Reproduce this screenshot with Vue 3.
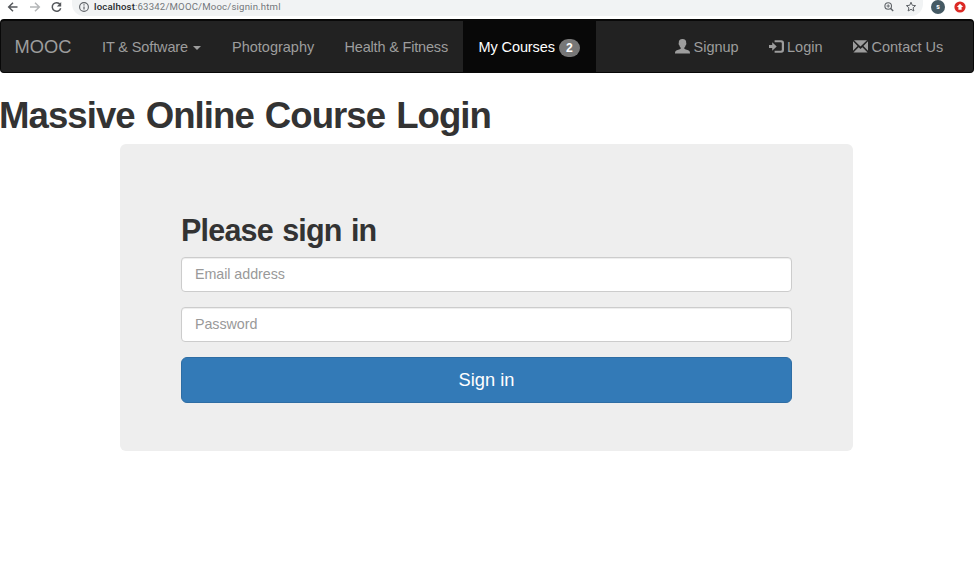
<script setup>
import { ref } from 'vue'

const email = ref('')
const password = ref('')
</script>

<template>
  <div class="page">
    <header class="browser">
      <svg class="nav-icons" width="72" height="16" viewBox="0 0 72 16" fill="none">
        <path d="M17.5 7H9M13 2.8L8.7 7L13 11.2" stroke="#55585c" stroke-width="1.5" />
        <path d="M30 7H39M35 2.8L39.3 7L35 11.2" stroke="#b4b6b8" stroke-width="1.5" />
        <path d="M60.1 4.5A4.3 4.3 0 1 0 60.7 8.2" stroke="#55585c" stroke-width="1.5" />
        <path d="M61.2 2V6.5H56.8Z" fill="#55585c" />
      </svg>
      <div class="omnibox">
        <svg class="info" width="12" height="14" viewBox="0 0 12 14" fill="none" stroke="#5f6368">
          <circle cx="6" cy="7" r="4.4" stroke-width="1.1" />
          <path d="M6 6.4V9.5M6 4.3V5.4" stroke-width="1.2" />
        </svg>
        <span class="url"><b>localhost</b>:63342/MOOC/Mooc/signin.html</span>
        <svg class="tools" width="40" height="16" viewBox="0 0 40 16" fill="none" stroke="#5f6368">
          <circle cx="8.2" cy="6" r="3.3" stroke-width="1.1" />
          <path d="M10.7 8.5L13.2 11" stroke-width="1.4" />
          <path d="M6.5 6H9.9M8.2 4.3V7.7" stroke-width=".9" />
          <path d="M31 2.2L32.3 5.3L35.6 5.6L33.1 7.8L33.9 11L31 9.3L28.1 11L28.9 7.8L26.4 5.6L29.7 5.3Z" stroke-width="1" />
        </svg>
      </div>
      <span class="avatar">s</span>
      <svg class="update" width="12" height="14" viewBox="0 0 12 14">
        <circle cx="6" cy="7" r="5.6" fill="#dc2a25" />
        <path d="M6 3.7L9.2 7.1H7.6V9.7H4.4V7.1H2.8Z" fill="#fff" />
      </svg>
    </header>

    <nav class="navbar">
      <a class="brand">MOOC</a>
      <a class="item software"><span>IT &amp; Software</span><i class="caret"></i></a>
      <a class="item photo">Photography</a>
      <a class="item health">Health &amp; Fitness</a>
      <a class="item active"><span>My Courses</span><span class="badge">2</span></a>
      <div class="right">
        <a class="item signup">
          <svg width="15" height="15" viewBox="0 0 15 15" fill="currentColor">
            <path d="M7.5 0C4.9 0 3.6 1.6 3.8 4C3.4 4.6 3.7 5.9 4.3 6.2C4.6 7.3 5.1 8.1 5.7 8.7V9.8C5.2 10.6 1.6 11 .7 12C.1 12.6 0 13.6 0 14.5H15C15 13.6 14.9 12.6 14.3 12C13.4 11 9.8 10.6 9.3 9.8V8.7C9.9 8.1 10.4 7.3 10.7 6.2C11.3 5.9 11.6 4.6 11.2 4C11.4 1.6 10.1 0 7.5 0Z" />
          </svg>
          <span>Signup</span>
        </a>
        <a class="item login">
          <svg width="15" height="15" viewBox="0 0 15 15" fill="currentColor">
            <path d="M0 5.9H3.2V3.3L7.7 7.5L3.2 11.7V9.1H0Z" />
            <path d="M5.6 1.2H12.3Q15 1.2 15 4V11Q15 13.8 12.3 13.8H5.6V11.8H11.8Q12.8 11.8 12.8 10.8V4.2Q12.8 3.2 11.8 3.2H5.6Z" />
          </svg>
          <span>Login</span>
        </a>
        <a class="item contact">
          <svg width="15" height="15" viewBox="0 0 15 15" fill="currentColor">
            <path d="M1 1.2H14L7.5 7.4Z" />
            <path d="M0 2.2L4.6 7.1L0 11.7ZM15 2.2L10.4 7.1L15 11.7Z" />
            <path d="M.4 13.6L5.6 8.3L7.5 10.1L9.4 8.3L14.6 13.6Z" />
          </svg>
          <span>Contact Us</span>
        </a>
      </div>
    </nav>

    <h1>Massive Online Course Login</h1>

    <form class="panel" @submit.prevent>
      <h2>Please sign in</h2>
      <input v-model="email" type="email" placeholder="Email address" />
      <input v-model="password" type="password" placeholder="Password" />
      <button type="submit">Sign in</button>
    </form>
  </div>
</template>

<style>
body {
  margin: 0;
  background: #fff;
}
</style>

<style scoped>
.page {
  width: 974px;
  height: 575px;
  overflow: hidden;
  background: #fff;
  color: #333;
  font-family: "Liberation Sans", Arial, sans-serif;
  font-size: 14.5px;
}
.page * {
  box-sizing: border-box;
}
.browser {
  display: flex;
  align-items: flex-start;
  height: 19px;
}
.nav-icons {
  flex: none;
}
.omnibox {
  display: flex;
  width: 851px;
  height: 16px;
  padding-left: 6px;
  background: #f1f3f4;
  border-radius: 0 0 12px 12px;
}
.url {
  margin-left: 4px;
  font: 9.6px/14px Roboto, sans-serif;
  letter-spacing: .18px;
  color: #73777b;
  white-space: nowrap;
}
.url b {
  font-weight: 500;
  color: #25282b;
}
.tools {
  margin-left: auto;
  margin-right: 3px;
}
.avatar {
  width: 14px;
  height: 14px;
  margin-left: 8px;
  border-radius: 50%;
  background: #455a64;
  color: #fff;
  font: bold 7px/14px Roboto, sans-serif;
  text-align: center;
}
.update {
  margin-left: 9px;
}
.navbar {
  display: flex;
  height: 54px;
  border: 1px solid #080808;
  border-top-width: 2px;
  border-radius: 4px;
  background: #222;
  color: #9d9d9d;
  line-height: 52px;
  white-space: nowrap;
}
.brand {
  width: 86px;
  padding-left: 13.5px;
  font-size: 18.3px;
  line-height: 51px;
}
.item {
  display: flex;
  padding-left: 15px;
}
.software {
  width: 130px;
  letter-spacing: -.12px;
}
.caret {
  margin: 25px 0 0 5px;
  width: 8px;
  height: 4px;
  background: currentColor;
  clip-path: polygon(0 0, 100% 0, 50% 100%);
}
.photo {
  width: 112.5px;
}
.health {
  width: 133px;
  letter-spacing: -.18px;
}
.active {
  width: 133px;
  padding-left: 16px;
  background: #080808;
  color: #fff;
  letter-spacing: -.1px;
}
.badge {
  width: 21px;
  height: 18px;
  margin: 18px 0 0 4px;
  border-radius: 10px;
  background: #777;
  font-size: 12.2px;
  font-weight: bold;
  line-height: 19px;
  text-align: center;
}
.right {
  display: flex;
  margin-left: auto;
}
.right svg {
  flex: none;
  margin: 17.5px 3.5px 0 0;
}
.signup {
  width: 93.5px;
}
.login {
  width: 84.5px;
}
.contact {
  width: 135px;
}
h1 {
  margin: 22px 0 8px -1px;
  font-size: 36.6px;
  line-height: 41px;
  letter-spacing: -.95px;
  word-spacing: 1.8px;
}
.panel {
  width: 733px;
  height: 307px;
  margin-left: 120px;
  padding: 66px 61px 0;
  border-radius: 6px;
  background: #eee;
}
h2 {
  margin: 0 0 7px;
  font-size: 30.5px;
  line-height: 40px;
  letter-spacing: -.8px;
  word-spacing: 1.6px;
}
input {
  display: block;
  width: 611px;
  height: 35px;
  margin: 0 0 15px;
  padding: 0 13px 2px;
  border: 1px solid #ccc;
  border-radius: 4px;
  background: #fff;
  box-shadow: inset 0 1px 1px rgba(0, 0, 0, .075);
  font: 14.3px "Liberation Sans", Arial, sans-serif;
  letter-spacing: -.06px;
  outline: none;
}
input::placeholder {
  color: #999;
  opacity: 1;
}
button {
  display: block;
  width: 611px;
  height: 46px;
  padding: 0 0 1px;
  border: 1px solid #2e6da4;
  border-radius: 6px;
  background: #337ab7;
  color: #fff;
  font: 18.3px "Liberation Sans", Arial, sans-serif;
}
</style>
